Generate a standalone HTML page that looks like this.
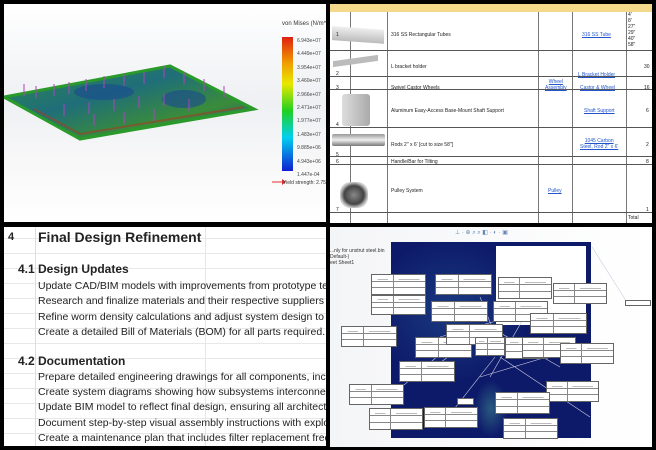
<!DOCTYPE html>
<html><head><meta charset="utf-8"><style>
*{margin:0;padding:0;box-sizing:border-box}
body{width:656px;height:450px;background:#000;position:relative;overflow:hidden;font-family:"Liberation Sans",sans-serif}
.q{position:absolute;overflow:hidden}
.t{position:absolute;white-space:nowrap}
.hl{position:absolute;background:#555;height:1px}
.vl{position:absolute;background:#777;width:1px}
.lb{position:absolute;background:#fff;border:1px solid #666;background-image:linear-gradient(#888,#888),linear-gradient(#888,#888),linear-gradient(#888,#888),linear-gradient(90deg,transparent 10%,#bbb 10%,#bbb 30%,transparent 30%,transparent 50%,#bbb 50%,#bbb 90%,transparent 90%);background-size:1px 100%,100% 1px,100% 1px,100% 1px;background-position:40% 0,0 33%,0 66%,0 20%;background-repeat:no-repeat}
.bl{font-size:10.5px;color:#222;position:absolute;left:38px;white-space:nowrap}
a{color:#2255cc;text-decoration:underline}
</style></head><body>

<!-- TL -->
<div class="q" style="left:4px;top:4px;width:322px;height:218px;background:linear-gradient(#fff 0%,#eef0f3 45%,#f7f7f8 70%,#fff 100%)">
<svg width="322" height="218" style="position:absolute;left:0;top:0">
<defs><linearGradient id="g" x1="0" y1="0" x2="1" y2="1">
<stop offset="0" stop-color="#2e8a4a"/><stop offset=".4" stop-color="#1f6e7a"/><stop offset=".7" stop-color="#3a8c3a"/><stop offset="1" stop-color="#2050a0"/></linearGradient>
<linearGradient id="lg" x1="0" y1="0" x2="0" y2="1"><stop offset="0" stop-color="#e02010"/><stop offset=".2" stop-color="#f0a000"/><stop offset=".35" stop-color="#e8e800"/><stop offset=".55" stop-color="#20d020"/><stop offset=".75" stop-color="#00d0f0"/><stop offset="1" stop-color="#1020d0"/></linearGradient></defs>
<polygon points="0,93 166,62 250,105 76,135" fill="url(#g)" stroke="#2a9a2a" stroke-width="3"/>
<ellipse cx="100" cy="88" rx="30" ry="8" fill="#1a4a90" opacity=".6"/>
<ellipse cx="180" cy="95" rx="22" ry="9" fill="#1a4a90" opacity=".6"/>
<polyline points="30,105 76,130 240,103" fill="none" stroke="#a04020" stroke-width="2" opacity=".6"/>
<g stroke="#b040c0" stroke-width="1">
<path d="M20 80v12M32 82v12M50 80v12M65 78v12M82 75v12M100 72v12M120 70v12M140 68v12M160 62v12M180 68v12M200 75v12M220 82v12M60 100v12M85 98v12M110 95v12M135 92v12M160 90v12M185 95v12M90 110v12M120 108v12M150 105v12"/></g>
<rect x="278" y="33" width="11" height="134" fill="url(#lg)"/>
<path d="M268 178h10" stroke="#e03030"/><path d="M278 175l4 3-4 3z" fill="#e03030"/>
</svg>
<div class="t" style="left:278px;top:17px;font-size:6px;color:#333">von Mises (N/m^2)</div>
<div style="position:absolute;left:293px;top:31px;font-size:5px;color:#444;line-height:13.4px">6.943e+07<br>4.449e+07<br>3.954e+07<br>3.460e+07<br>2.966e+07<br>2.471e+07<br>1.977e+07<br>1.483e+07<br>9.885e+06<br>4.943e+06<br>1.447e-04</div>
<div class="t" style="left:279px;top:176px;font-size:5px;color:#333">Yield strength: 2.75</div>
</div>

<!-- TR -->
<div class="q" style="left:330px;top:4px;width:322px;height:219px;background:#fff;font-size:5px;color:#222">
<div style="position:absolute;left:0;top:0;width:322px;height:8px;background:#f5d98a"></div>
<div class="vl" style="left:20px;top:8px;height:211px"></div>
<div class="vl" style="left:57px;top:8px;height:211px"></div>
<div class="vl" style="left:208px;top:8px;height:211px"></div>
<div class="vl" style="left:242px;top:8px;height:211px"></div>
<div class="vl" style="left:296px;top:8px;height:211px"></div>
<div class="hl" style="left:0;top:46px;width:322px"></div>
<div class="hl" style="left:0;top:72px;width:322px"></div>
<div class="hl" style="left:0;top:85px;width:322px"></div>
<div class="hl" style="left:0;top:123px;width:322px"></div>
<div class="hl" style="left:0;top:152px;width:322px"></div>
<div class="hl" style="left:0;top:160px;width:322px"></div>
<div class="hl" style="left:0;top:208px;width:322px"></div>
<div style="position:absolute;left:2px;top:24px;width:52px;height:14px;background:linear-gradient(#eee,#bbb);transform:skewY(4deg)"></div>
<div style="position:absolute;left:3px;top:54px;width:45px;height:6px;background:#bbb;transform:skewY(-8deg)"></div>
<div style="position:absolute;left:12px;top:90px;width:28px;height:32px;background:linear-gradient(90deg,#ddd,#aaa);border-radius:3px"></div>
<div style="position:absolute;left:2px;top:130px;width:53px;height:12px;background:linear-gradient(#999,#eee,#777);border-radius:2px"></div>
<div style="position:absolute;left:10px;top:178px;width:28px;height:26px;background:radial-gradient(#888,#444 50%,#ccc 70%);border-radius:40%"></div>
<div class="t" style="left:6px;top:28px">1</div><div class="t" style="left:61px;top:28px">316 SS Rectangular Tubes</div><div class="t" style="left:252px;top:28px"><a>316 SS Tube</a></div>
<div class="t" style="left:298px;top:8px;line-height:6px">4'<br>8'<br>27"<br>29"<br>40"<br>58"</div>
<div class="t" style="left:6px;top:67px">2</div><div class="t" style="left:61px;top:60px">L bracket holder</div><div class="t" style="left:248px;top:68px"><a>L Bracket Holder</a></div><div class="t" style="left:314px;top:60px">30</div>
<div class="t" style="left:6px;top:81px">3</div><div class="t" style="left:61px;top:81px">Swivel Castor Wheels</div><div class="t" style="left:215px;top:75px;text-align:center;line-height:6px"><a>Wheel<br>Assembly</a></div><div class="t" style="left:250px;top:81px"><a>Castor &amp; Wheel</a></div><div class="t" style="left:314px;top:81px">16</div>
<div class="t" style="left:6px;top:118px">4</div><div class="t" style="left:61px;top:104px">Aluminum Easy-Access Base-Mount Shaft Support</div><div class="t" style="left:254px;top:104px"><a>Shaft Support</a></div><div class="t" style="left:316px;top:104px">6</div>
<div class="t" style="left:6px;top:148px">5</div><div class="t" style="left:61px;top:138px">Rods 2" x 6' [cut to size 58"]</div><div class="t" style="left:250px;top:134px;text-align:center;line-height:6px"><a>1045 Carbon<br>Steel, Rod 2" x 6'</a></div><div class="t" style="left:316px;top:138px">2</div>
<div class="t" style="left:6px;top:155px">6</div><div class="t" style="left:61px;top:155px">Handle/Bar for Tilting</div><div class="t" style="left:316px;top:155px">8</div>
<div class="t" style="left:6px;top:203px">7</div><div class="t" style="left:61px;top:184px">Pulley System</div><div class="t" style="left:218px;top:184px"><a>Pulley</a></div><div class="t" style="left:316px;top:203px">1</div>
<div class="t" style="left:298px;top:211px">Total</div>
</div>

<!-- BL -->
<div class="q" style="left:4px;top:227px;width:322px;height:219px;background:#fff;background-image:linear-gradient(90deg,transparent 31px,#ddd 31px,#ddd 32px,transparent 32px),linear-gradient(90deg,transparent 201px,#e6e6e6 201px,#e6e6e6 202px,transparent 202px),linear-gradient(#e8e8e8 1px,transparent 1px);background-size:100% 100%,100% 100%,100% 15px;background-position:0 0,0 0,0 11px">
</div>
<div class="q" style="left:4px;top:227px;width:322px;height:219px;">
<div class="t" style="left:4px;top:4px;font-size:11px;font-weight:bold;color:#222">4</div>
<div class="t" style="left:34px;top:2px;font-size:14px;font-weight:bold;color:#222">Final Design Refinement</div>
<div class="t" style="left:14px;top:35px;font-size:12px;font-weight:bold;color:#222">4.1 Design Updates</div>
<div class="bl" style="left:34px;top:53px">Update CAD/BIM models with improvements from prototype testing, including</div>
<div class="bl" style="left:34px;top:68px">Research and finalize materials and their respective suppliers considering cost</div>
<div class="bl" style="left:34px;top:84px">Refine worm density calculations and adjust system design to ensure optimal</div>
<div class="bl" style="left:34px;top:99px">Create a detailed Bill of Materials (BOM) for all parts required.</div>
<div class="t" style="left:14px;top:127px;font-size:12px;font-weight:bold;color:#222">4.2 Documentation</div>
<div class="bl" style="left:34px;top:144px">Prepare detailed engineering drawings for all components, including electrical</div>
<div class="bl" style="left:34px;top:159px">Create system diagrams showing how subsystems interconnect</div>
<div class="bl" style="left:34px;top:174px">Update BIM model to reflect final design, ensuring all architectural, structural</div>
<div class="bl" style="left:34px;top:190px">Document step-by-step visual assembly instructions with exploded views</div>
<div class="bl" style="left:34px;top:205px">Create a maintenance plan that includes filter replacement frequency and</div>
</div>

<!-- BR -->
<div class="q" style="left:330px;top:227px;width:322px;height:220px;background:linear-gradient(90deg,#f4f5f7,#fff)">
<div style="position:absolute;left:61px;top:15px;width:200px;height:196px;background:#0d1a6a;background-image:radial-gradient(ellipse at 50% 85%,#2a5a80 0,transparent 12%),radial-gradient(ellipse at 30% 35%,#1a3a80 0,transparent 40%)"></div>
<div style="position:absolute;left:166px;top:19px;width:90px;height:79px;background:#fff"></div>
<div class="t" style="left:0;top:21px;font-size:5px;color:#333;line-height:6px">...nly for unstrut steel.bin<br>Default-)<br>eet Sheet1</div>
<div class="t" style="left:125px;top:2px;font-size:6px;color:#6688bb">⊥ · ⊕ ⌕ ⌕ ◧ · ◐ · ▣</div>
<svg width="322" height="220" style="position:absolute;left:0;top:0"><g stroke="#ccd" stroke-width=".6" fill="none">
<path d="M262 20L300 80M110 110L180 90M150 70L170 120M200 80L160 150M90 150L160 100M60 170L130 110M170 130L260 190M110 200L165 130M230 140L160 100M150 150L250 120"/></g></svg>
</div>
<div class="lb" style="left:371px;top:274px;width:55px;height:21px"></div>
<div class="lb" style="left:371px;top:295px;width:55px;height:20px"></div>
<div class="lb" style="left:435px;top:274px;width:57px;height:21px"></div>
<div class="lb" style="left:431px;top:301px;width:57px;height:21px"></div>
<div class="lb" style="left:498px;top:277px;width:54px;height:22px"></div>
<div class="lb" style="left:493px;top:301px;width:55px;height:21px"></div>
<div class="lb" style="left:553px;top:283px;width:54px;height:21px"></div>
<div class="lb" style="left:341px;top:326px;width:56px;height:21px"></div>
<div class="lb" style="left:530px;top:313px;width:57px;height:21px"></div>
<div class="lb" style="left:415px;top:337px;width:57px;height:21px"></div>
<div class="lb" style="left:446px;top:324px;width:57px;height:21px"></div>
<div class="lb" style="left:475px;top:337px;width:30px;height:19px"></div>
<div class="lb" style="left:505px;top:337px;width:43px;height:22px"></div>
<div class="lb" style="left:522px;top:337px;width:54px;height:21px"></div>
<div class="lb" style="left:560px;top:343px;width:54px;height:21px"></div>
<div class="lb" style="left:399px;top:361px;width:56px;height:21px"></div>
<div class="lb" style="left:349px;top:384px;width:55px;height:21px"></div>
<div class="lb" style="left:546px;top:381px;width:53px;height:21px"></div>
<div class="lb" style="left:495px;top:392px;width:55px;height:22px"></div>
<div class="lb" style="left:369px;top:408px;width:54px;height:22px"></div>
<div class="lb" style="left:424px;top:407px;width:54px;height:21px"></div>
<div class="lb" style="left:503px;top:418px;width:55px;height:21px"></div>
<div style="position:absolute;left:625px;top:300px;width:26px;height:6px;background:#fff;border:1px solid #666"></div>
<div style="position:absolute;left:457px;top:398px;width:17px;height:7px;background:#fff;border:1px solid #666"></div>
</body></html>
